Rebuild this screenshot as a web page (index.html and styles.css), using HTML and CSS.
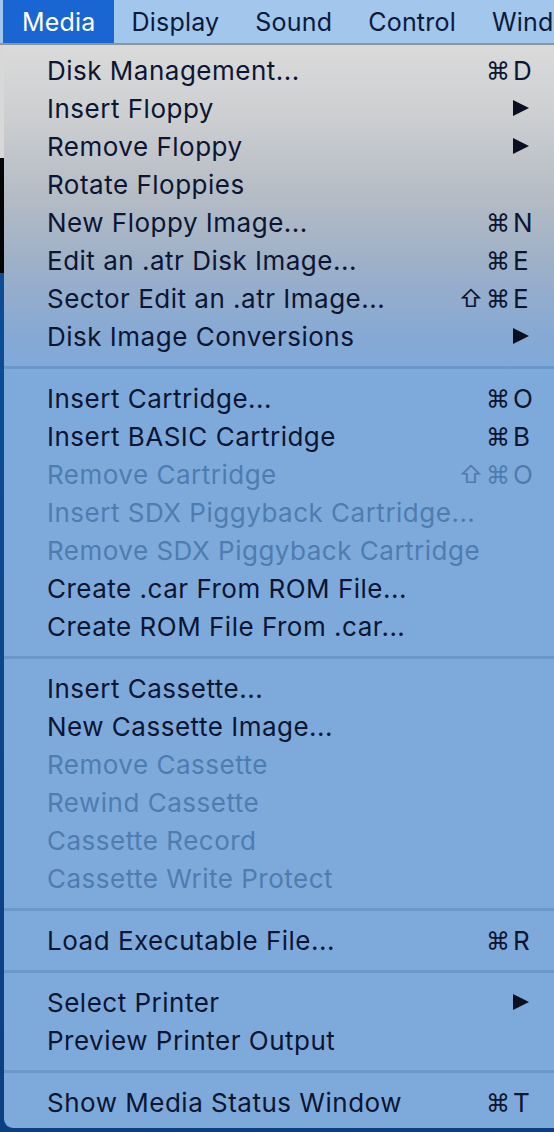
FILE: index.html
```html
<!DOCTYPE html>
<html>
<head>
<meta charset="utf-8">
<link rel="stylesheet" href="styles.css">
</head>
<body>
<div class="desktop">
  <div class="menubar">
    <div class="mb-item active">Media</div>
    <div class="mb-item">Display</div>
    <div class="mb-item">Sound</div>
    <div class="mb-item">Control</div>
    <div class="mb-item">Window</div>
  </div>
  <div class="strip"></div>
  <div class="menu">
    <div class="row"><span class="label">Disk Management...</span><span class="sc"><span class="mods">⌘</span><span class="key">D</span></span></div>
    <div class="row"><span class="label">Insert Floppy</span><svg class="arrow" viewBox="0 0 18 18"><polygon points="1,1 17,9 1,17"/></svg></div>
    <div class="row"><span class="label">Remove Floppy</span><svg class="arrow" viewBox="0 0 18 18"><polygon points="1,1 17,9 1,17"/></svg></div>
    <div class="row"><span class="label">Rotate Floppies</span></div>
    <div class="row"><span class="label">New Floppy Image...</span><span class="sc"><span class="mods">⌘</span><span class="key">N</span></span></div>
    <div class="row"><span class="label">Edit an .atr Disk Image...</span><span class="sc"><span class="mods">⌘</span><span class="key">E</span></span></div>
    <div class="row"><span class="label">Sector Edit an .atr Image...</span><span class="sc"><span class="mods">⇧ ⌘</span><span class="key">E</span></span></div>
    <div class="row"><span class="label">Disk Image Conversions</span><svg class="arrow" viewBox="0 0 18 18"><polygon points="1,1 17,9 1,17"/></svg></div>
    <div class="sep"></div>
    <div class="row"><span class="label">Insert Cartridge...</span><span class="sc"><span class="mods">⌘</span><span class="key">O</span></span></div>
    <div class="row"><span class="label">Insert BASIC Cartridge</span><span class="sc"><span class="mods">⌘</span><span class="key">B</span></span></div>
    <div class="row dis"><span class="label">Remove Cartridge</span><span class="sc"><span class="mods">⇧ ⌘</span><span class="key">O</span></span></div>
    <div class="row dis"><span class="label">Insert SDX Piggyback Cartridge...</span></div>
    <div class="row dis"><span class="label">Remove SDX Piggyback Cartridge</span></div>
    <div class="row"><span class="label">Create .car From ROM File...</span></div>
    <div class="row"><span class="label">Create ROM File From .car...</span></div>
    <div class="sep"></div>
    <div class="row"><span class="label">Insert Cassette...</span></div>
    <div class="row"><span class="label">New Cassette Image...</span></div>
    <div class="row dis"><span class="label">Remove Cassette</span></div>
    <div class="row dis"><span class="label">Rewind Cassette</span></div>
    <div class="row dis"><span class="label">Cassette Record</span></div>
    <div class="row dis"><span class="label">Cassette Write Protect</span></div>
    <div class="sep"></div>
    <div class="row"><span class="label">Load Executable File...</span><span class="sc"><span class="mods">⌘</span><span class="key">R</span></span></div>
    <div class="sep"></div>
    <div class="row"><span class="label">Select Printer</span><svg class="arrow" viewBox="0 0 18 18"><polygon points="1,1 17,9 1,17"/></svg></div>
    <div class="row"><span class="label">Preview Printer Output</span></div>
    <div class="sep"></div>
    <div class="row"><span class="label">Show Media Status Window</span><span class="sc"><span class="mods">⌘</span><span class="key">T</span></span></div>
  </div>
</div>
</body>
</html>
```
FILE: styles.css
```css
html, body {
  margin: 0;
  padding: 0;
}
body {
  width: 554px;
  height: 1132px;
  overflow: hidden;
  font-family: Inter, "DejaVu Sans", sans-serif;
  font-size: 26px;
  background: #0b3f82;
}
.desktop {
  position: relative;
  width: 554px;
  height: 1132px;
  overflow: hidden;
}
.menubar {
  display: flex;
  height: 43px;
  background: #a2c6ec;
  border-bottom: 2px solid #8c959e;
  padding-left: 3px;
  white-space: nowrap;
  font-size: 25px;
  letter-spacing: 0.2px;
}
.mb-item {
  display: flex;
  align-items: center;
  padding: 0 18px;
  color: #0a1a3a;
  flex: none;
}
.mb-item.active {
  background: #1966d2;
  color: #ffffff;
  padding-left: 19px;
}
.strip {
  height: 1087px;
  width: 4px;
  background: linear-gradient(to bottom,
    #d8d8d8 0, #d8d8d8 113px,
    #050505 113px, #050505 228px,
    #0d4d96 228px, #0b3f82 100%);
}
.menu {
  position: absolute;
  left: 4px;
  top: 45px;
  width: 580px;
  height: 1083px;
  box-sizing: border-box;
  padding: 6px 0 7px 0;
  border-bottom-left-radius: 9px;
  background: linear-gradient(to bottom,
    #dadada 0px, #cdcfd1 70px, #b5bcc5 150px, #9db0c8 220px, #86a9d4 290px, #7eaadb 330px, #7eaadb 100%);
  color: #0c1532;
}
.row {
  display: flex;
  align-items: center;
  height: 38px;
  padding: 0 47px 0 43px;
  white-space: nowrap;
  letter-spacing: 0.5px;
}
.label {
  flex: 1;
}
.sc {
  display: flex;
  align-items: center;
  letter-spacing: 0;
}
.mods {
  text-align: right;
  margin-right: 3px;
  font-size: 24px;
  word-spacing: -4px;
}
.key {
  width: 24px;
  text-align: left;
}
.arrow {
  width: 18px;
  height: 18px;
  margin-right: 7px;
  fill: #0a1020;
}
.dis {
  color: #4e7cb0;
}
.sep {
  height: 24px;
  display: flex;
  align-items: center;
}
.sep::before {
  content: "";
  display: block;
  width: 100%;
  height: 3px;
  background: #6c98c9;
}
```
